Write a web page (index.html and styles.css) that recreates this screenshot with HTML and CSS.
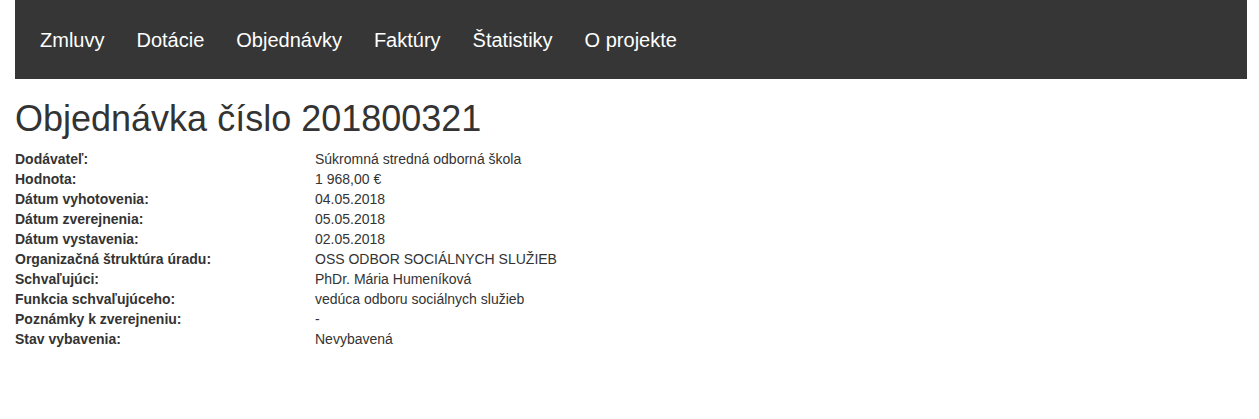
FILE: index.html
```html
<!DOCTYPE html>
<html lang="sk">
<head>
<meta charset="utf-8">
<title>Objednávka číslo 201800321</title>
<link rel="stylesheet" href="styles.css">
</head>
<body>
<div class="page">
  <nav class="navbar">
    <ul class="nav">
      <li><a href="#">Zmluvy</a></li>
      <li><a href="#">Dotácie</a></li>
      <li><a href="#">Objednávky</a></li>
      <li><a href="#">Faktúry</a></li>
      <li><a href="#">Štatistiky</a></li>
      <li><a href="#">O projekte</a></li>
    </ul>
  </nav>
  <h1 class="title">Objednávka číslo 201800321</h1>
  <table class="details">
    <tr><th>Dodávateľ:</th><td>Súkromná stredná odborná škola</td></tr>
    <tr><th>Hodnota:</th><td>1 968,00 €</td></tr>
    <tr><th>Dátum vyhotovenia:</th><td>04.05.2018</td></tr>
    <tr><th>Dátum zverejnenia:</th><td>05.05.2018</td></tr>
    <tr><th>Dátum vystavenia:</th><td>02.05.2018</td></tr>
    <tr><th>Organizačná štruktúra úradu:</th><td>OSS ODBOR SOCIÁLNYCH SLUŽIEB</td></tr>
    <tr><th>Schvaľujúci:</th><td>PhDr. Mária Humeníková</td></tr>
    <tr><th>Funkcia schvaľujúceho:</th><td>vedúca odboru sociálnych služieb</td></tr>
    <tr><th>Poznámky k zverejneniu:</th><td>-</td></tr>
    <tr><th>Stav vybavenia:</th><td>Nevybavená</td></tr>
  </table>
</div>
</body>
</html>
```

FILE: styles.css
```css
* { box-sizing: border-box; }
html, body { margin: 0; padding: 0; background: #fff; }
body {
  font-family: "Liberation Sans", Arial, Helvetica, sans-serif;
  font-size: 14px;
  line-height: 20px;
  color: #333;
}
.page { padding: 0 12px 0 15px; }
.navbar {
  background: #363636;
  height: 79px;
  display: flex;
  align-items: center;
  padding-left: 9px;
}
.nav {
  list-style: none;
  margin: 0;
  padding: 0;
  display: flex;
}
.nav a {
  display: block;
  padding: 0 16px;
  font-size: 20px;
  line-height: 24px;
  color: #fff;
  text-decoration: none;
}
.title {
  margin: 20px 0 10px;
  font-size: 36px;
  font-weight: 500;
  line-height: 1.1;
  color: #333;
}
.details {
  border-collapse: collapse;
}
.details th, .details td {
  padding: 0;
  text-align: left;
  vertical-align: top;
}
.details th {
  width: 300px;
  font-weight: bold;
}
```
